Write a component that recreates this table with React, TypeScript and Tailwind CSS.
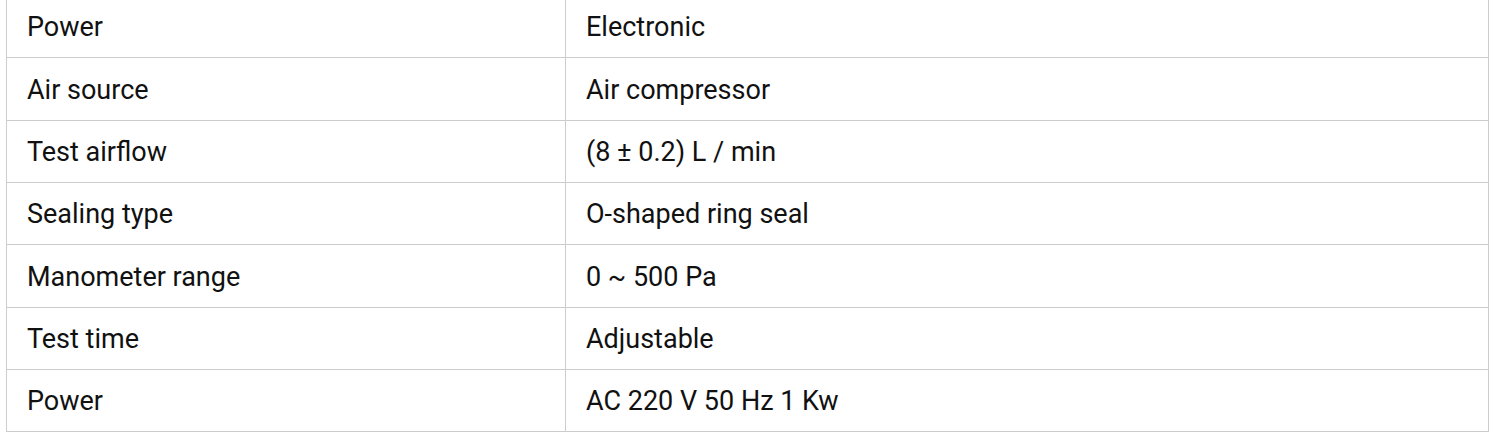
const rows: [string, string][] = [
  ["Power", "Electronic"],
  ["Air source", "Air compressor"],
  ["Test airflow", "(8 ± 0.2) L / min"],
  ["Sealing type", "O-shaped ring seal"],
  ["Manometer range", "0 ~ 500 Pa"],
  ["Test time", "Adjustable"],
  ["Power", "AC 220 V 50 Hz 1 Kw"],
];

export default function App() {
  return (
    <div className="w-[1494px] h-[444px] overflow-hidden bg-white">
      <table
        className="ml-[6px] -mt-[5px] w-[1483px] border-collapse text-[27px] text-[#111]"
        style={{ fontFamily: "Roboto, 'Noto Sans', sans-serif" }}
      >
        <tbody>
          {rows.map(([label, value], i) => (
            <tr key={i} className="h-[62.33px]">
              <td className="w-[559px] border border-[#cccccc] px-[20px] pt-[2px] pb-0 align-middle">
                {label}
              </td>
              <td className="border border-[#cccccc] px-[20px] pt-[2px] pb-0 align-middle">
                {value}
              </td>
            </tr>
          ))}
        </tbody>
      </table>
    </div>
  );
}
